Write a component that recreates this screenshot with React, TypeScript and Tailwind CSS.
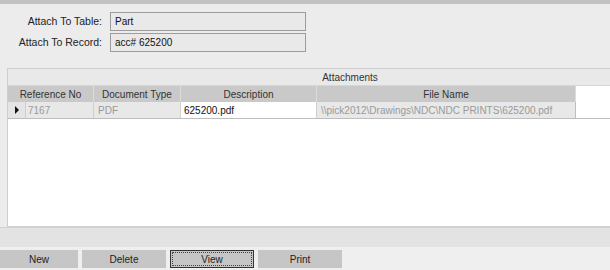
const columns = [
  {label: "Document Type", w: "w-[87px]"},
  {label: "Description", w: "w-[136px]"},
  {label: "File Name", w: "w-[259px]"},
];

const Field = ({label, value}: {label: string; value: string}) => (
  <div className="flex items-center h-[19px]">
    <span className="w-[103px] pr-[1px] text-right text-[10.5px] text-[#222]">{label}</span>
    <div className="ml-[7px] w-[196px] h-[19px] border border-[#9c9c9c] bg-[#e9e9e9] flex items-center px-[4px] text-[10px] text-[#111]">
      {value}
    </div>
  </div>
);

export default function App() {
  const buttons = ["New", "Delete", "View", "Print"];

  return (
    <div className="w-[610px] h-[270px] overflow-hidden bg-[#ececec] font-['Liberation_Sans',Arial,sans-serif] flex flex-col">
      <div className="h-[4px] bg-[#c2c2c2] shrink-0" />
      <div className="flex flex-col gap-[2px] pt-[8px]">
        <Field label="Attach To Table:" value="Part" />
        <Field label="Attach To Record:" value="acc# 625200" />
      </div>

      <div className="mt-[16px] ml-[7px] w-[686px] h-[159px] shrink-0 border border-[#cfcfcf] bg-white flex flex-col">
        <div className="h-[17px] bg-[#e9e9e9] border-b border-[#d6d6d6] flex items-center justify-center text-[10px] text-[#333]">
          Attachments
        </div>
        <div className="flex h-[16px] text-[10px] text-[#333]">
          <div className="w-[86px] bg-[#c9c9c9] border-r border-[#dcdcdc] flex items-center justify-center">Reference No</div>
          {columns.map((c) => (
            <div key={c.label} className={`${c.w} bg-[#c9c9c9] border-r border-[#dcdcdc] flex items-center justify-center`}>
              {c.label}
            </div>
          ))}
        </div>
        <div className="flex h-[17px] text-[10px] border-b border-[#bdbdbd]">
          <div className="w-[18px] bg-[#e4e4e4] border-r border-[#cfcfcf] flex items-center justify-center">
            <svg width="6" height="8" viewBox="0 0 6 8">
              <path d="M1 0 L5 4 L1 8 Z" fill="#111" />
            </svg>
          </div>
          <div className="w-[68px] bg-[#e8e8e8] border-r border-[#d0d0d0] flex items-center px-[2px] text-[#9a9a9a]">7167</div>
          <div className="w-[87px] bg-[#e8e8e8] border-r border-[#d0d0d0] flex items-center px-[4px] text-[#9a9a9a]">PDF</div>
          <div className="w-[136px] bg-white border-r border-[#d0d0d0] flex items-center px-[3px] text-[#111]">625200.pdf</div>
          <div className="w-[259px] bg-[#e8e8e8] border-r border-[#bdbdbd] flex items-center px-[4px] text-[#9a9a9a]">
            \\pick2012\Drawings\NDC\NDC PRINTS\625200.pdf
          </div>
        </div>
      </div>

      <div className="h-[20px] bg-[#e3e3e3] border-t border-[#d2d2d2] shrink-0" />
      <div className="flex gap-[4px] pt-[3px] bg-[#efefef] flex-1">
        {buttons.map((b, i) => (
          <div
            key={b}
            className={`h-[18px] ${i === 0 ? "w-[78px]" : "w-[84px]"} bg-[#c6c6c6] flex items-center justify-center text-[10px] text-[#222] ${
              b === "View" ? "border border-[#333] outline outline-1 outline-dotted outline-[#444] -outline-offset-[3px]" : ""
            }`}
          >
            {b}
          </div>
        ))}
      </div>
    </div>
  );
}
